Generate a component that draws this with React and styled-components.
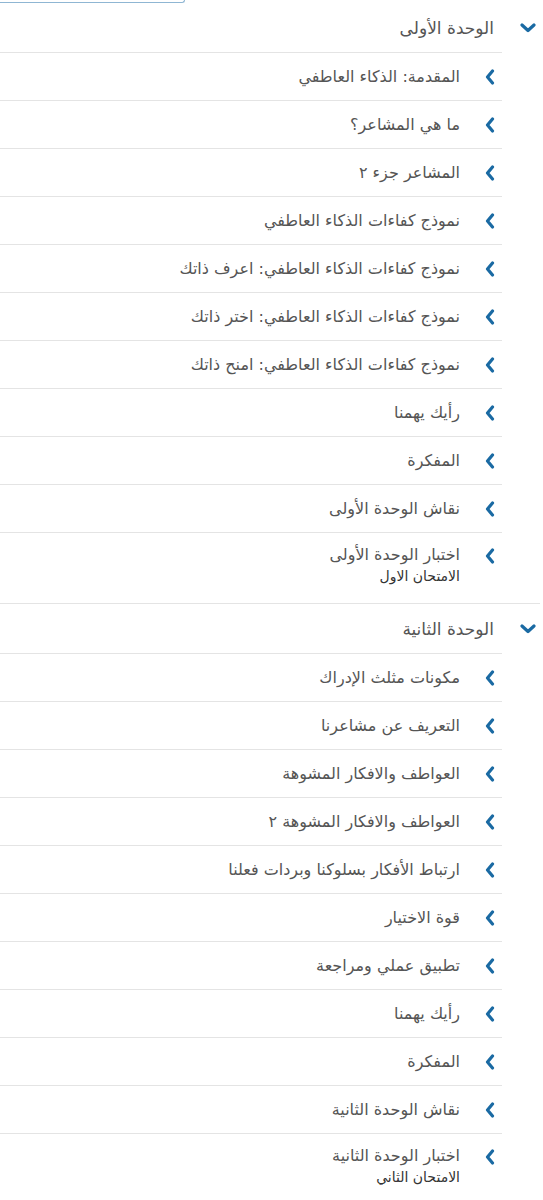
import React from 'react'
import styled, {createGlobalStyle} from 'styled-components'

const GlobalStyle = createGlobalStyle`
html, body {
    margin: 0;
    padding: 0;
    background: #ffffff;
}
body {
    font-family: "DejaVu Sans", "Noto Sans", sans-serif;
    direction: rtl;
}
`

const units = [
    {
        title: 'الوحدة الأولى',
        lessons: [
            {title: 'المقدمة: الذكاء العاطفي'},
            {title: 'ما هي المشاعر؟'},
            {title: 'المشاعر جزء ٢'},
            {title: 'نموذج كفاءات الذكاء العاطفي'},
            {title: 'نموذج كفاءات الذكاء العاطفي: اعرف ذاتك'},
            {title: 'نموذج كفاءات الذكاء العاطفي: اختر ذاتك'},
            {title: 'نموذج كفاءات الذكاء العاطفي: امنح ذاتك'},
            {title: 'رأيك يهمنا'},
            {title: 'المفكرة'},
            {title: 'نقاش الوحدة الأولى'},
            {title: 'اختبار الوحدة الأولى', sub: 'الامتحان الاول'},
        ],
    },
    {
        title: 'الوحدة الثانية',
        lessons: [
            {title: 'مكونات مثلث الإدراك'},
            {title: 'التعريف عن مشاعرنا'},
            {title: 'العواطف والافكار المشوهة'},
            {title: 'العواطف والافكار المشوهة ٢'},
            {title: 'ارتباط الأفكار بسلوكنا وبردات فعلنا'},
            {title: 'قوة الاختيار'},
            {title: 'تطبيق عملي ومراجعة'},
            {title: 'رأيك يهمنا'},
            {title: 'المفكرة'},
            {title: 'نقاش الوحدة الثانية'},
            {title: 'اختبار الوحدة الثانية', sub: 'الامتحان الثاني'},
        ],
    },
]

const ChevronDown = () => (
    <svg width="16" height="10" viewBox="0 0 16 10">
        <path d="M2 2 L8 7.5 L14 2" fill="none" stroke="#1a6aa3" strokeWidth="3.2" strokeLinecap="round" strokeLinejoin="round" />
    </svg>
)

const ChevronLeft = () => (
    <svg width="10" height="16" viewBox="0 0 10 16">
        <path d="M7.5 2 L2.5 8 L7.5 14" fill="none" stroke="#1a6aa3" strokeWidth="3.2" strokeLinecap="round" strokeLinejoin="round" />
    </svg>
)

export default function App() {
    return (
        <>
            <GlobalStyle />
            <Page>
                <TopBar>
                    <SearchStub />
                </TopBar>
                {units.map((unit) => (
                    <Unit key={unit.title}>
                        <UnitHeader>
                            <IconSlot $w={16}><ChevronDown /></IconSlot>
                            <UnitTitle>{unit.title}</UnitTitle>
                        </UnitHeader>
                        <Lessons>
                            {unit.lessons.map((lesson) => (
                                <Lesson key={lesson.title} $tall={!!lesson.sub}>
                                    <IconSlot $w={10}><ChevronLeft /></IconSlot>
                                    <LessonText>
                                        <LessonTitle>{lesson.title}</LessonTitle>
                                        {lesson.sub && <LessonSub>{lesson.sub}</LessonSub>}
                                    </LessonText>
                                </Lesson>
                            ))}
                        </Lessons>
                    </Unit>
                ))}
            </Page>
        </>
    )
}

const Page = styled.div`
width: 540px;
margin-right: 3px;
`

const TopBar = styled.div`
display: flex;
justify-content: flex-end;
height: 3px;
`

const SearchStub = styled.div`
width: 186px;
height: 2px;
margin-left: -3px;
border: 1px solid #8fb6d3;
border-top: none;
border-radius: 0 0 4px 0;
`

const Unit = styled.section`
border-bottom: 1px solid #e4e4e4;
`

const UnitHeader = styled.div`
display: flex;
align-items: center;
height: 49px;
padding-right: 4px;
gap: 26px;
`

const IconSlot = styled.span`
display: flex;
align-items: center;
justify-content: center;
width: ${(p) => p.$w}px;
flex-shrink: 0;
`

const UnitTitle = styled.div`
font-size: 17px;
color: #555555;
`

const Lessons = styled.div`
margin-right: 38px;
`

const Lesson = styled.div`
display: flex;
align-items: ${(p) => (p.$tall ? 'flex-start' : 'center')};
height: ${(p) => (p.$tall ? 58 : 47)}px;
padding-top: ${(p) => (p.$tall ? 12 : 0)}px;
border-top: 1px solid #e4e4e4;
padding-right: 7px;
gap: 25px;
svg {
    margin-top: ${(p) => (p.$tall ? 3 : 0)}px;
}
`

const LessonText = styled.div`
display: flex;
flex-direction: column;
gap: 4px;
`

const LessonTitle = styled.div`
font-size: 16px;
color: #555555;
`

const LessonSub = styled.div`
font-size: 14px;
color: #333333;
`
